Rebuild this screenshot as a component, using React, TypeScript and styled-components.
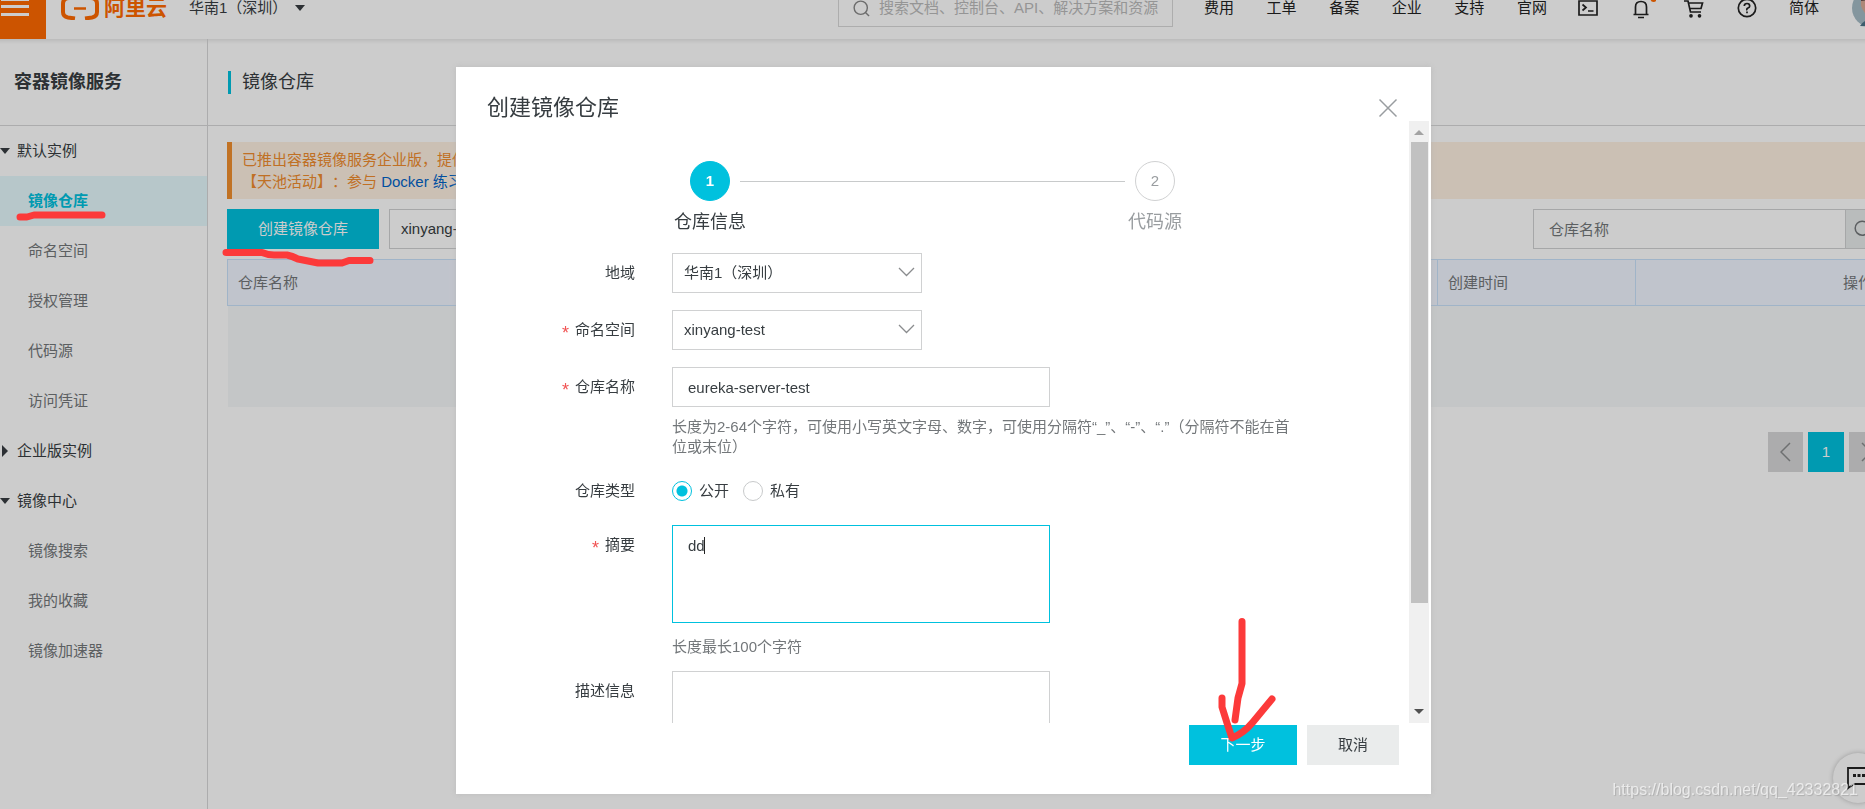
import React from 'react';
import styled, { createGlobalStyle, css } from 'styled-components';

const GlobalStyle = createGlobalStyle`
  *, *::before, *::after { box-sizing: border-box; }
  html, body { margin: 0; }
  body {
    overflow: hidden;
    background: #fff;
    color: #373d41;
    font: 15px/20px "Liberation Sans", "Noto Sans CJK SC", sans-serif;
    text-spacing-trim: space-all;
  }
  button, input, select, textarea { font: inherit; color: inherit; margin: 0; border-radius: 0; }
  a { color: inherit; text-decoration: none; }
  h1, h2, p, ul { margin: 0; padding: 0; font-weight: 400; }
  ul { list-style: none; }
`;

const Shell = styled.div`
  position: relative;
  display: flex;
  flex-direction: column;
  width: calc(100% + 22px);
  min-height: 100vh;
`;

/* ---------- top bar ---------- */

const TopBar = styled.header`
  position: relative;
  z-index: 1;
  flex: none;
  height: 39px;
  overflow: hidden;
  background: #fff;
`;

const TopBarInner = styled.div`
  display: flex;
  align-items: center;
  height: 62px;
  margin-top: -23px;
`;

const TopShadow = styled.div`
  height: 5px;
  margin-bottom: -5px;
  background: linear-gradient(rgba(0, 0, 0, 0.08), rgba(0, 0, 0, 0));
`;

const MenuButton = styled.button`
  width: 46px;
  height: 62px;
  padding: 0;
  border: 0;
  background: #ff6a00;
  text-align: left;
  svg { display: block; }
`;

const Logo = styled.a`
  display: flex;
  align-items: center;
  gap: 5px;
  margin-left: 15px;
  color: #ff6a00;
  font-size: 21px;
  line-height: 28px;
  font-weight: 700;
`;

const RegionButton = styled.button`
  display: flex;
  align-items: center;
  gap: 8px;
  margin-left: 22px;
  padding: 0;
  border: 0;
  background: none;
`;

const Triangle = styled.span<{ $right?: boolean }>`
  flex: none;
  border: 5px solid transparent;
  ${(p) =>
    p.$right
      ? css`
          border-width: 6px 0 6px 6px;
          border-left-color: currentColor;
          margin: 0 2px;
        `
      : css`
          border-width: 6px 5px 0;
          border-top-color: currentColor;
        `}
`;

const GlobalSearch = styled.label`
  display: flex;
  align-items: center;
  gap: 9px;
  width: 335px;
  height: 38px;
  margin-left: auto;
  padding-left: 14px;
  border: 1px solid #d9d9d9;
  color: #888;
  input {
    flex: 1;
    min-width: 0;
    padding: 0;
    border: 0;
    outline: 0;
    background: none;
  }
  input::placeholder { color: #bbb; opacity: 1; }
`;

const TopNav = styled.nav`
  display: flex;
  align-items: center;
  margin-left: 31px;
  color: #222;
`;

const NavLinks = styled.div`
  display: flex;
  justify-content: space-between;
  width: 343px;
  margin-right: 15px;
`;

const NavLink = styled.a``;

const Language = styled(NavLink)`
  padding: 0 33px 0 15px;
`;

const NavIcon = styled.button`
  display: flex;
  justify-content: center;
  width: 53px;
  padding: 0;
  border: 0;
  background: none;
`;

/* ---------- side bar ---------- */

const Columns = styled.div`
  display: flex;
  flex: 1;
`;

const SideBar = styled.aside`
  flex: none;
  width: 208px;
  border-right: 1px solid #d7d8d9;
`;

const SideTitle = styled.h2`
  display: flex;
  align-items: center;
  height: 87px;
  padding-left: 14px;
  border-bottom: 1px solid #d7d8d9;
  font-size: 18px;
  font-weight: 700;
`;

const SideGroup = styled.button`
  display: flex;
  align-items: center;
  gap: 7px;
  width: 100%;
  height: 50px;
  padding: 0;
  border: 0;
  background: none;
  text-align: left;
`;

const SideLink = styled.a<{ $active?: boolean }>`
  display: flex;
  align-items: center;
  height: 50px;
  padding-left: 28px;
  color: ${(p) => (p.$active ? '#00c1de' : '#73777a')};
  background: ${(p) => (p.$active ? '#e5f9fd' : 'none')};
  font-weight: ${(p) => (p.$active ? 700 : 400)};
`;

/* ---------- main area ---------- */

const Main = styled.main`
  flex: 1;
  min-width: 0;
`;

const PageTitle = styled.div`
  display: flex;
  align-items: center;
  height: 87px;
  padding-left: 20px;
  border-bottom: 1px solid #d7d8d9;
  h1 {
    padding-left: 11px;
    border-left: 3px solid #00c1de;
    font-size: 18px;
    line-height: 23px;
  }
`;

const Content = styled.div`
  padding: 16px 3px 0 19px;
`;

const Notice = styled.div`
  height: 57px;
  padding: 7px 10px;
  border-left: 5px solid #f28f2e;
  background: #fef0e2;
  color: #f08c2d;
  line-height: 22px;
  white-space: nowrap;
  overflow: hidden;
  a { color: #0064c8; }
`;

const ToolRow = styled.div`
  display: flex;
  gap: 10px;
  margin: 10px 0;
`;

const Button = styled.button<{ $kind: 'primary' | 'plain'; $wide?: number }>`
  width: ${(p) => p.$wide ?? 92}px;
  height: 40px;
  padding: 0;
  border: 0;
  color: ${(p) => (p.$kind === 'primary' ? '#fff' : '#373d41')};
  background: ${(p) => (p.$kind === 'primary' ? '#00c1de' : '#eaecec')};
`;

const SelectBox = styled.div`
  display: grid;
  align-items: center;
  width: 250px;
  select, svg { grid-area: 1 / 1; }
  select {
    width: 100%;
    height: 40px;
    padding: 0 30px 0 11px;
    border: 1px solid #d0d1d2;
    outline: 0;
    appearance: none;
    background: #fff;
  }
  svg {
    justify-self: end;
    margin: 0 7px 3px 0;
    pointer-events: none;
  }
`;

const TextInput = styled.input`
  width: 378px;
  height: 40px;
  padding: 0 15px;
  border: 1px solid #d0d1d2;
  outline: 0;
  background: #fff;
  &::placeholder { color: #73777a; opacity: 1; }
`;

const SearchGroup = styled.div`
  display: flex;
  margin-left: auto;
  ${TextInput} { width: 313px; }
  button {
    width: 39px;
    margin-left: -1px;
    padding: 0 0 0 8px;
    border: 1px solid #d0d1d2;
    background: #e8ebeb;
    color: #73777a;
  }
  svg { display: block; }
`;

const RepoTable = styled.table`
  width: 100%;
  border-collapse: collapse;
  table-layout: fixed;
  color: #73777a;
  th {
    height: 46px;
    padding: 0 10px;
    border: 1px solid #c8e1fa;
    background: #f1f5ff;
    font-weight: 400;
    text-align: left;
  }
  th:nth-child(2) { width: 198px; }
  th:nth-child(3) { width: 248px; text-align: right; }
  td { height: 101px; background: #f5f8f9; }
`;

const Pager = styled.nav`
  display: flex;
  justify-content: flex-end;
  gap: 5px;
  margin-top: 25px;
`;

const PageButton = styled.button<{ $active?: boolean }>`
  display: flex;
  align-items: center;
  justify-content: center;
  width: ${(p) => (p.$active ? 36 : 35)}px;
  height: 40px;
  padding: 0;
  border: 0;
  color: ${(p) => (p.$active ? '#fff' : '#8a8c8e')};
  background: ${(p) => (p.$active ? '#00c1de' : '#d7d8d9')};
`;

const ChatButton = styled.button`
  position: fixed;
  right: -18px;
  bottom: 6px;
  display: flex;
  align-items: center;
  width: 50px;
  height: 50px;
  padding: 0 0 0 14px;
  border: 0;
  border-radius: 25px;
  background: #fff;
  box-shadow: 0 0 5px rgba(0, 0, 0, 0.25);
  svg { flex: none; }
`;

/* ---------- dialog ---------- */

const Backdrop = styled.div`
  position: absolute;
  inset: 0;
  z-index: 2;
  display: flex;
  justify-content: center;
  align-items: flex-start;
  padding-top: 67px;
  background: rgba(0, 0, 0, 0.2);
`;

const Dialog = styled.section`
  display: flex;
  flex-direction: column;
  width: 975px;
  max-width: 100%;
  height: calc(100vh - 82px);
  background: #fff;
  box-shadow: 0 0 6px rgba(170, 170, 170, 0.5);
`;

const DialogHead = styled.header`
  display: flex;
  align-items: center;
  justify-content: space-between;
  height: 54px;
  padding: 28px 33px 0 31px;
  h2 { font-size: 22px; line-height: 26px; }
  button {
    padding: 0;
    border: 0;
    background: none;
    color: #999da0;
  }
  svg { display: block; }
`;

const DialogBody = styled.div`
  display: flex;
  flex: 1;
  min-height: 0;
  padding-right: 2px;
`;

const Scroller = styled.div`
  flex: 1;
  padding-top: 40px;
  overflow: hidden;
`;

const ScrollTrack = styled.div`
  display: flex;
  flex-direction: column;
  align-items: center;
  width: 20px;
  padding: 9px 0;
  background: #f0f0f0;
  svg { flex: none; display: block; }
`;

const ScrollThumb = styled.div`
  flex: none;
  width: 17px;
  height: 79%;
  margin: 7px 0 auto;
  background: #c1c1c1;
`;

const DialogFoot = styled.footer`
  display: flex;
  justify-content: flex-end;
  gap: 10px;
  padding: 2px 32px 29px;
`;

const Steps = styled.div`
  display: flex;
  align-items: flex-start;
  gap: 10px;
  padding: 0 234px;
`;

const StepLine = styled.span`
  flex: 1;
  height: 1px;
  margin-top: 20px;
  background: #c8cacb;
`;

const Step = styled.div<{ $active?: boolean }>`
  display: flex;
  flex-direction: column;
  align-items: center;
  gap: 11px;
  width: 40px;
  color: ${(p) => (p.$active ? '#373d41' : '#999da0')};
  font-size: 18px;
  white-space: nowrap;
  b {
    display: flex;
    align-items: center;
    justify-content: center;
    width: 40px;
    height: 40px;
    border: 1px solid ${(p) => (p.$active ? '#00c1de' : '#d0d1d2')};
    border-radius: 20px;
    background: ${(p) => (p.$active ? '#00c1de' : '#fff')};
    color: ${(p) => (p.$active ? '#fff' : '#999da0')};
    font-size: 15px;
    font-weight: ${(p) => (p.$active ? 700 : 400)};
  }
`;

const Form = styled.form`
  margin-top: 21px;
`;

const FormRow = styled.div<{ $tight?: boolean }>`
  display: grid;
  grid-template-columns: 179px minmax(0, 625px);
  column-gap: 37px;
  margin-bottom: ${(p) => (p.$tight ? 14 : 17)}px;
`;

const Label = styled.label<{ $required?: boolean }>`
  height: 40px;
  line-height: 40px;
  text-align: right;
  ${(p) =>
    p.$required &&
    css`
      &::before {
        content: '*';
        margin-right: 6px;
        color: #f15353;
        font-size: 18px;
        vertical-align: -4px;
        line-height: 20px;
      }
    `}
`;

const Help = styled.p`
  margin-top: 10px;
  color: #73777a;
`;

const AreaWrap = styled.div`
  position: relative;
  padding-bottom: 4px;
`;

const Caret = styled.span`
  position: absolute;
  top: 12px;
  left: 32px;
  width: 1px;
  height: 17px;
  background: #222;
`;

const TextArea = styled.textarea<{ $focused?: boolean }>`
  display: block;
  width: 378px;
  height: 98px;
  padding: 10px 15px;
  border: 1px solid ${(p) => (p.$focused ? '#00c1de' : '#d0d1d2')};
  outline: 0;
  resize: none;
`;

const RadioRow = styled.div`
  display: flex;
  align-items: center;
  gap: 14px;
  height: 40px;
  label {
    display: flex;
    align-items: center;
    gap: 7px;
  }
  input {
    width: 20px;
    height: 20px;
    appearance: none;
    border: 1px solid #c8cacb;
    border-radius: 10px;
    background: #fff;
  }
  input:checked {
    border-color: #00c1de;
    background: radial-gradient(circle, #00c1de 5px, #fff 6px);
  }
`;

/* ---------- layers above the dialog ---------- */

const Watermark = styled.div`
  position: fixed;
  z-index: 4;
  right: 7px;
  bottom: 9px;
  color: rgba(255, 255, 255, 0.65);
  font-size: 16px;
  text-shadow: 1px 1px 1px rgba(0, 0, 0, 0.15);
  pointer-events: none;
`;

const MarkerLayer = styled.svg`
  position: absolute;
  inset: 0;
  z-index: 3;
  width: 100%;
  height: 100%;
  pointer-events: none;
  fill: none;
  stroke: #fc3a3a;
  stroke-width: 7;
  stroke-linecap: round;
  stroke-linejoin: round;
`;

const Chevron = () => (
  <svg width="17" height="10" viewBox="0 0 17 10" fill="none" stroke="#8a8c8e" strokeWidth="1.3">
    <path d="M1 1l7.500 7.500L16 1" />
  </svg>
);

const Magnifier = ({ size }: { size: number }) => (
  <svg width={size} height={size} viewBox="0 0 18 18" fill="none" stroke="currentColor" strokeWidth="1.5">
    <circle cx="8.200" cy="8.200" r="7" />
    <path d="M13.200 13.200L17 17" />
  </svg>
);

const links = ['费用', '工单', '备案', '企业', '支持', '官网'];

const menu = [
  { title: '默认实例', open: true, items: ['镜像仓库', '命名空间', '授权管理', '代码源', '访问凭证'] },
  { title: '企业版实例', open: false, items: [] },
  { title: '镜像中心', open: true, items: ['镜像搜索', '我的收藏', '镜像加速器'] },
];

export default function App() {
  return (
    <>
      <GlobalStyle />
      <Shell>
        <TopBar>
          <TopBarInner>
            <MenuButton aria-label="菜单">
              <svg width="46" height="62" viewBox="0 0 46 62" stroke="#fff" strokeWidth="3">
                <path d="M1 22.500H29M1 29.500H29M1 37.500H29" />
              </svg>
            </MenuButton>
            <Logo href="#">
              <svg width="38" height="24" viewBox="0 0 38 24" fill="none" stroke="currentColor">
                <path d="M15 2H8Q2 2 2 8V16Q2 20.500 7 21.500L14 22.500" strokeWidth="4" />
                <path d="M23 2H30Q36 2 36 8V16Q36 20.500 31 21.500L24 22.500" strokeWidth="4" />
                <path d="M13 12.500H25" strokeWidth="2.500" />
              </svg>
              阿里云
            </Logo>
            <RegionButton>
              华南1（深圳）
              <Triangle />
            </RegionButton>
            <GlobalSearch>
              <Magnifier size={17} />
              <input aria-label="搜索" placeholder="搜索文档、控制台、API、解决方案和资源" />
            </GlobalSearch>
            <TopNav>
              <NavLinks>
                {links.map((t) => (
                  <NavLink href="#" key={t}>{t}</NavLink>
                ))}
              </NavLinks>
              <NavIcon aria-label="终端">
                <svg width="20" height="16" viewBox="0 0 20 16" fill="none" stroke="currentColor" strokeWidth="1.700">
                  <path d="M1 1H19V15H1ZM4.500 4.500L8 7.500L4.500 10.500M10 11H15.500" />
                </svg>
              </NavIcon>
              <NavIcon aria-label="通知">
                <svg width="30" height="30" viewBox="0 0 30 30" fill="none" stroke="currentColor" strokeWidth="1.700">
                  <path d="M7.500 21.500H22.500M9.500 21.500V14Q9.500 8.500 15 8.500T20.500 14V21.500M12 24.500H18" />
                  <circle cx="27.500" cy="6" r="3" fill="#ff6a00" stroke="none" />
                </svg>
              </NavIcon>
              <NavIcon aria-label="购物车">
                <svg width="20" height="19" viewBox="0 0 20 19" fill="none" stroke="currentColor" strokeWidth="1.700">
                  <path d="M0 2H4L6.500 13H17M4.500 4H18.500L17 9.500H6" />
                  <circle cx="7" cy="16.800" r="1" />
                  <circle cx="15.500" cy="16.800" r="1" />
                </svg>
              </NavIcon>
              <NavIcon aria-label="帮助">
                <svg width="20" height="20" viewBox="0 0 20 20" fill="none" stroke="currentColor" strokeWidth="1.700">
                  <circle cx="10" cy="10" r="8.700" />
                  <path d="M7.300 8Q7.300 5.500 10 5.500T12.700 8Q12.700 9.300 11 10T10 12.300M10 13.500V15.200" />
                </svg>
              </NavIcon>
              <Language href="#">简体</Language>
              <svg width="35" height="38" viewBox="0 0 35 38">
                <circle cx="19" cy="19" r="19" fill="#a6bcc6" />
                <path d="M9 17Q8 2 20 2V30Q13 27 9 17Z" fill="#d9ab98" />
                <path d="M9 12Q10 1 22 1V10Z" fill="#5b4444" />
                <path d="M8 37Q12 30 22 30V38Z" fill="#4d7488" />
              </svg>
            </TopNav>
          </TopBarInner>
        </TopBar>
        <TopShadow />

        <Columns>
          <SideBar>
            <SideTitle>容器镜像服务</SideTitle>
            {menu.map((group) => (
              <React.Fragment key={group.title}>
                <SideGroup>
                  <Triangle $right={!group.open} />
                  {group.title}
                </SideGroup>
                {group.items.map((item) => (
                  <SideLink href="#" key={item} $active={item === '镜像仓库'}>{item}</SideLink>
                ))}
              </React.Fragment>
            ))}
          </SideBar>

          <Main>
            <PageTitle>
              <h1>镜像仓库</h1>
            </PageTitle>
            <Content>
              <Notice>
                <p>已推出容器镜像服务企业版，提供</p>
                <p>【天池活动】：参与 <a href="#">Docker 练习</a></p>
              </Notice>
              <ToolRow>
                <Button $kind="primary" $wide={152}>创建镜像仓库</Button>
                <SelectBox>
                  <select aria-label="命名空间" defaultValue="xinyang-test">
                    <option>xinyang-test</option>
                  </select>
                  <Chevron />
                </SelectBox>
                <SearchGroup>
                  <TextInput aria-label="仓库名称" placeholder="仓库名称" />
                  <button aria-label="搜索"><Magnifier size={18} /></button>
                </SearchGroup>
              </ToolRow>
              <RepoTable>
                <thead>
                  <tr>
                    <th>仓库名称</th>
                    <th>创建时间</th>
                    <th>操作</th>
                  </tr>
                </thead>
                <tbody>
                  <tr>
                    <td colSpan={3} />
                  </tr>
                </tbody>
              </RepoTable>
              <Pager>
                <PageButton aria-label="上一页">
                  <svg width="11" height="20" viewBox="0 0 11 20" fill="none" stroke="currentColor" strokeWidth="1.500">
                    <path d="M10 1L1 10L10 19" />
                  </svg>
                </PageButton>
                <PageButton $active>1</PageButton>
                <PageButton aria-label="下一页">
                  <svg width="11" height="20" viewBox="0 0 11 20" fill="none" stroke="currentColor" strokeWidth="1.500">
                    <path d="M1 1L10 10L1 19" />
                  </svg>
                </PageButton>
              </Pager>
            </Content>
          </Main>
        </Columns>

        <ChatButton aria-label="客服">
          <svg width="24" height="24" viewBox="0 0 24 24" fill="none" stroke="#222" strokeWidth="1.800">
            <path d="M1 2H23V18H7L1 22Z" />
            <path d="M6 9.500H23" strokeWidth="3" strokeDasharray="3 1.500" />
          </svg>
        </ChatButton>

        <Backdrop>
          <Dialog role="dialog" aria-label="创建镜像仓库">
            <DialogHead>
              <h2>创建镜像仓库</h2>
              <button aria-label="关闭">
                <svg width="20" height="20" viewBox="0 0 20 20" stroke="currentColor" strokeWidth="1.500">
                  <path d="M1.500 1.500L18.500 18.500M18.500 1.500L1.500 18.500" />
                </svg>
              </button>
            </DialogHead>
            <DialogBody>
              <Scroller>
                <Steps>
                  <Step $active><b>1</b>仓库信息</Step>
                  <StepLine />
                  <Step><b>2</b>代码源</Step>
                </Steps>
                <Form>
                  <FormRow>
                    <Label htmlFor="region">地域</Label>
                    <SelectBox>
                      <select id="region">
                        <option>华南1（深圳）</option>
                      </select>
                      <Chevron />
                    </SelectBox>
                  </FormRow>
                  <FormRow>
                    <Label htmlFor="namespace" $required>命名空间</Label>
                    <SelectBox>
                      <select id="namespace">
                        <option>xinyang-test</option>
                      </select>
                      <Chevron />
                    </SelectBox>
                  </FormRow>
                  <FormRow $tight>
                    <Label htmlFor="repo" $required>仓库名称</Label>
                    <div>
                      <TextInput id="repo" defaultValue="eureka-server-test" />
                      <Help>
                        长度为2-64个字符，可使用小写英文字母、数字，可使用分隔符“_”、“-”、“.”（分隔符不能在首位或末位）
                      </Help>
                    </div>
                  </FormRow>
                  <FormRow $tight>
                    <Label as="span">仓库类型</Label>
                    <RadioRow role="radiogroup" aria-label="仓库类型">
                      <label><input type="radio" name="type" defaultChecked />公开</label>
                      <label><input type="radio" name="type" />私有</label>
                    </RadioRow>
                  </FormRow>
                  <FormRow $tight>
                    <Label htmlFor="summary" $required>摘要</Label>
                    <div>
                      <AreaWrap>
                        <TextArea id="summary" $focused defaultValue="dd" />
                        <Caret />
                      </AreaWrap>
                      <Help>长度最长100个字符</Help>
                    </div>
                  </FormRow>
                  <FormRow $tight>
                    <Label htmlFor="description">描述信息</Label>
                    <TextArea id="description" />
                  </FormRow>
                </Form>
              </Scroller>
              <ScrollTrack aria-hidden>
                <svg width="10" height="5" viewBox="0 0 10 5" fill="#a3a3a3"><path d="M5 0L10 5H0Z" /></svg>
                <ScrollThumb />
                <svg width="10" height="5" viewBox="0 0 10 5" fill="#505050"><path d="M0 0H10L5 5Z" /></svg>
              </ScrollTrack>
            </DialogBody>
            <DialogFoot>
              <Button $kind="primary" $wide={108}>下一步</Button>
              <Button $kind="plain">取消</Button>
            </DialogFoot>
          </Dialog>
        </Backdrop>

        <MarkerLayer aria-hidden>
          <path d="M20 217H27L34 215H102" />
          <path d="M226 252.500H262Q268 255 274 255H287Q292 256 298 259L318 263H342L349 260.500H370" />
          <path d="M1242 621.500V683.500L1238 698L1235 720" />
          <path d="M1222 698V707L1227 723L1232 738Q1244 733 1253 722L1272 699" />
        </MarkerLayer>
        <Watermark>https://blog.csdn.net/qq_42332821</Watermark>
      </Shell>
    </>
  );
}
